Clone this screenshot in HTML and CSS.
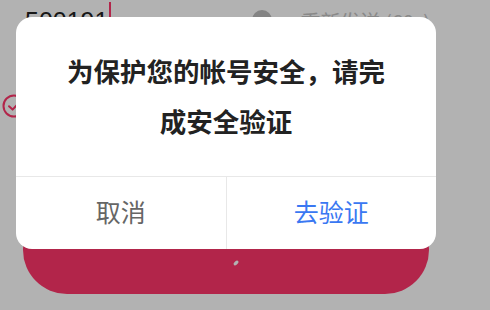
FILE: index.html
```html
<!DOCTYPE html>
<html lang="zh-CN">
<head>
<meta charset="utf-8">
<title>安全验证</title>
<link rel="stylesheet" href="styles.css">
</head>
<body>
<div class="page">
  <div class="code-row">
    <span class="code">500191</span>
    <span class="caret"></span>
    <span class="spacer"></span>
    <span class="clear"></span>
    <span class="resend">重新发送 (60s)</span>
  </div>
  <div class="agree-row">
    <svg class="check" width="24" height="24" viewBox="0 0 24 24">
      <circle cx="12" cy="12" r="10.5" fill="none" stroke="#ff366a" stroke-width="2"/>
      <path d="M7 12.2 L10.6 15.6 L17 8.8" fill="none" stroke="#ff366a" stroke-width="2" stroke-linecap="round" stroke-linejoin="round"/>
    </svg>
  </div>
  <div class="submit">
    <svg class="spin" width="8" height="8" viewBox="0 0 8 8">
      <ellipse cx="4" cy="4" rx="3" ry="1.6" transform="rotate(-45 4 4)" fill="#ffffff"/>
    </svg>
  </div>
</div>
<div class="mask"></div>
<div class="dialog">
  <div class="dialog-msg">为保护您的帐号安全，请完成安全验证</div>
  <div class="dialog-actions">
    <div class="btn btn-cancel">取消</div>
    <div class="btn btn-ok">去验证</div>
  </div>
</div>
</body>
</html>
```
FILE: styles.css
```css
html, body {
  margin: 0;
  padding: 0;
}
body {
  width: 490px;
  height: 310px;
  overflow: hidden;
  position: relative;
  background: #ffffff;
  font-family: "Noto Sans CJK SC", "Noto Sans", sans-serif;
}
.page {
  display: flex;
  flex-direction: column;
}
.code-row {
  display: flex;
  align-items: flex-start;
  height: 40px;
  padding-left: 25px;
  padding-right: 60px;
}
.code {
  font-family: "Liberation Sans", Arial, sans-serif;
  font-size: 25px;
  line-height: 40px;
  color: #222222;
  margin-top: 1px;
}
.caret {
  width: 2px;
  height: 30px;
  margin-top: 2px;
  margin-left: 1px;
  background: #ff366a;
}
.spacer {
  flex: 1;
}
.clear {
  width: 20px;
  height: 20px;
  border-radius: 50%;
  background: #bdbdbd;
  margin-top: 10px;
  margin-right: 28px;
}
.resend {
  font-size: 20px;
  line-height: 30px;
  margin-top: 7px;
  color: #c4c4c4;
  white-space: nowrap;
}
.agree-row {
  display: flex;
  align-items: center;
  height: 24px;
  margin-top: 54px;
  padding-left: 2px;
}
.check {
  display: block;
}
.submit {
  margin: 87px 61px 0 23px;
  height: 89px;
  border-radius: 44px;
  background: #ff366a;
  display: flex;
  justify-content: center;
  align-items: flex-start;
  padding-top: 54px;
  box-sizing: border-box;
}
.spin {
  display: block;
  margin-left: 20px;
}
.mask {
  position: absolute;
  inset: 0;
  background: rgba(0, 0, 0, 0.3);
}
.dialog {
  position: absolute;
  left: 16px;
  top: 17px;
  width: 420px;
  background: #ffffff;
  border-radius: 16px;
  overflow: hidden;
}
.dialog-msg {
  padding: 29px 48px 30px;
  font-size: 26.5px;
  line-height: 50px;
  font-weight: 700;
  color: #222222;
  text-align: center;
  border-bottom: 1px solid #e8e8e8;
}
.dialog-actions {
  display: flex;
  height: 72px;
}
.btn {
  flex: 1;
  display: flex;
  align-items: center;
  justify-content: center;
  font-size: 25px;
  padding-bottom: 5px;
}
.btn-cancel {
  color: #666666;
  border-right: 1px solid #e8e8e8;
}
.btn-ok {
  color: #3a78f2;
}
```
